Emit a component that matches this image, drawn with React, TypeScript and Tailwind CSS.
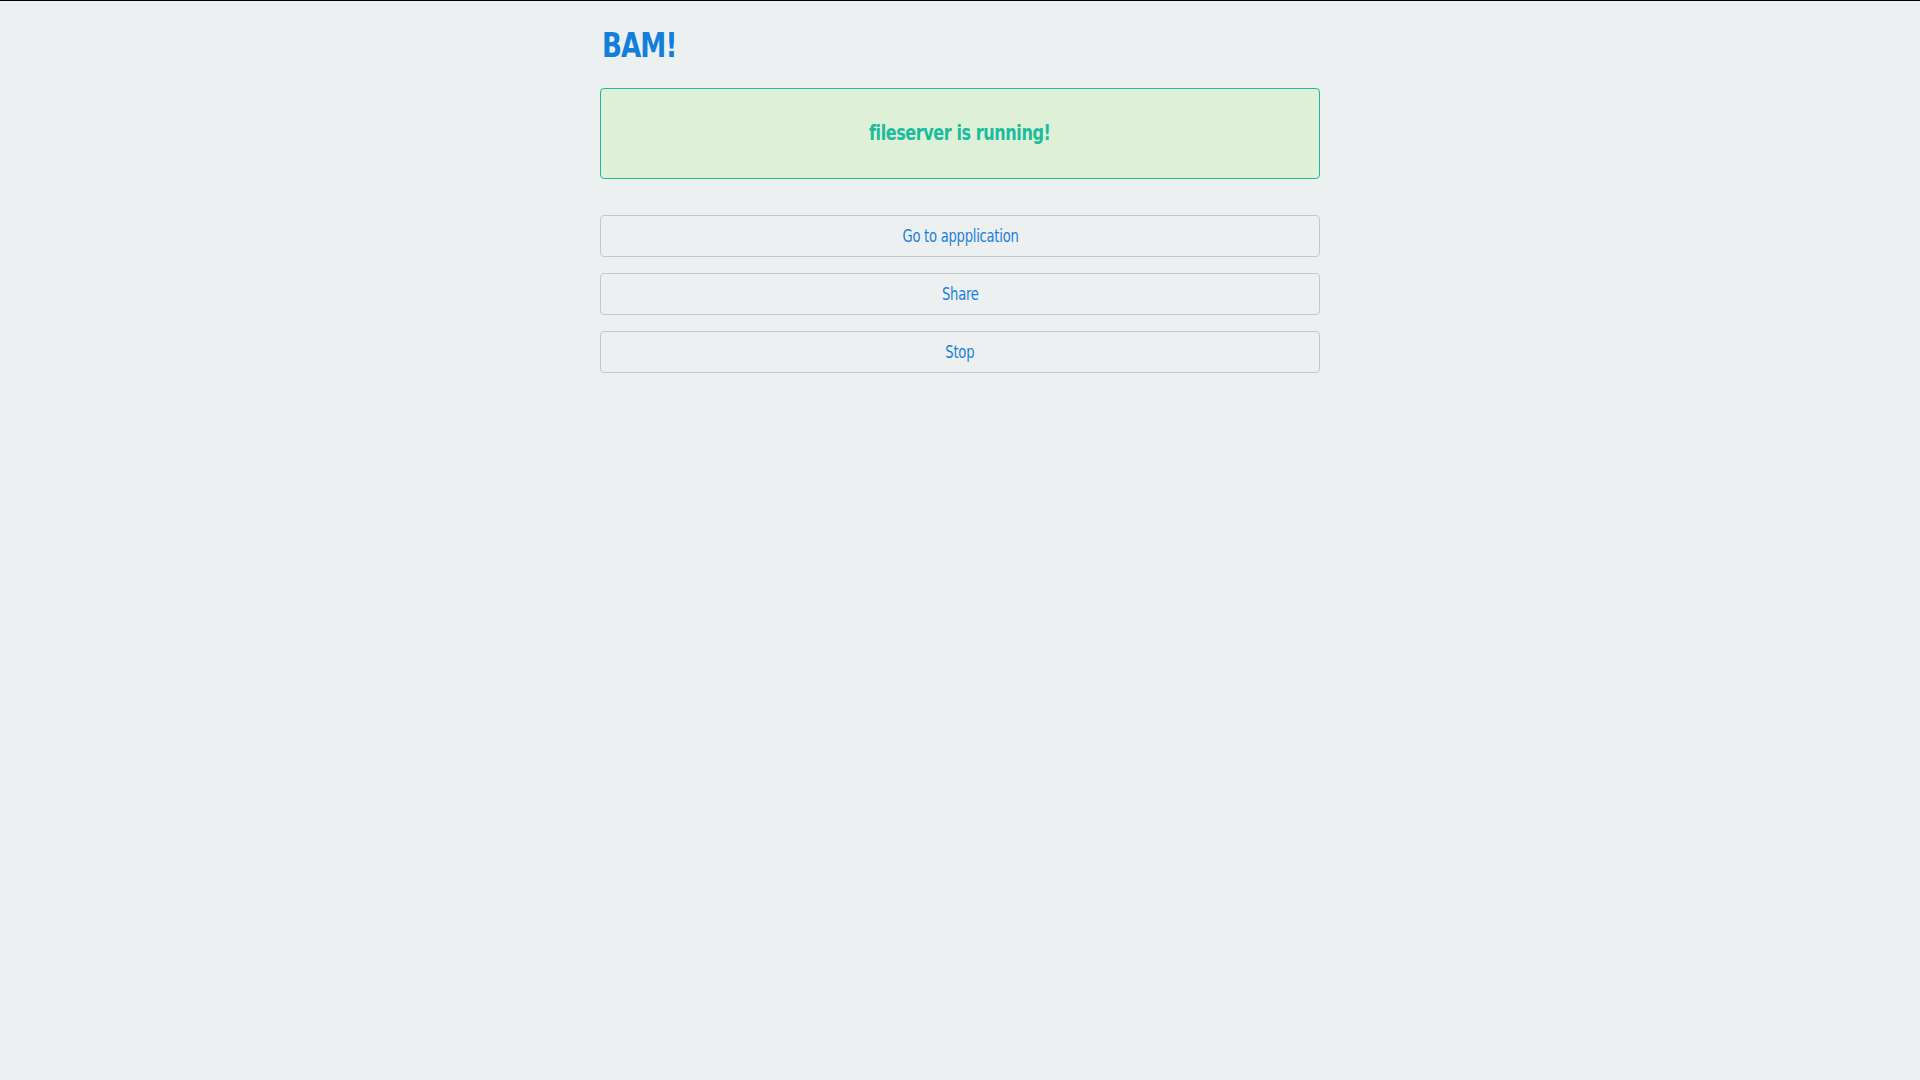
import React from "react";

const font = { fontFamily: '"DejaVu Sans Condensed", "DejaVu Sans", sans-serif' };

export default function App() {
  return (
    <div
      className="min-h-[1080px] w-full bg-[#ecf0f1] border-t border-black [font-stretch:condensed]"
      style={font}
    >
      <div className="mx-auto w-[720px] pt-[25px]">
        <h1 className="h-[40px] text-[33px] leading-[40px] font-bold text-[#137fdb] tracking-[-1px] pl-[2px]">
          <span className="inline-block origin-left scale-x-[0.88]">BAM!</span>
        </h1>
        <div className="mt-[22px] h-[91px] rounded-[4px] border border-[#1abc9c] bg-[#dff0d8] flex items-center justify-center">
          <span className="inline-block scale-x-[0.85] text-[21px] font-bold text-[#1abc9c] tracking-[-0.5px]">fileserver is running!</span>
        </div>
        <div className="mt-[36px] flex flex-col gap-[16px]">
          {["Go to appplication", "Share", "Stop"].map((t) => (
            <button
              key={t}
              className="h-[42px] w-full rounded-[4px] border border-[#c4c8c9] bg-[#ecf0f1] text-[17px] text-[#1b7fd8] flex items-center justify-center pt-[2px]"
            >
              <span className="inline-block scale-x-[0.86] tracking-[-0.3px]">{t}</span>
            </button>
          ))}
        </div>
      </div>
    </div>
  );
}
